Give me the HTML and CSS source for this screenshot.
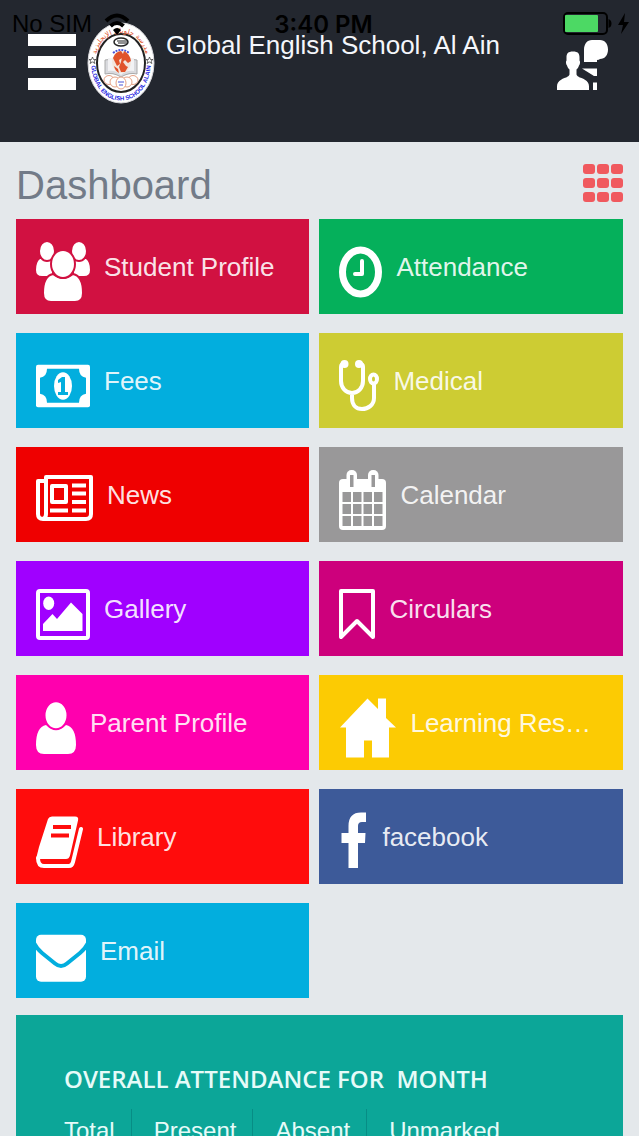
FILE: index.html
```html
<!DOCTYPE html>
<html lang="en">
<head>
    <meta charset="UTF-8">
    <meta name="viewport" content="width=device-width, initial-scale=1.0">
    <title>Global English School, Al Ain</title>
    <link rel="stylesheet" href="styles.css">
</head>
<body>
    <div class="status-bar">
        <span class="carrier">No SIM</span>
        <svg class="wifi" viewBox="0 0 26 22" aria-hidden="true">
            <path d="M2 8Q13 -3 24 8M6.500 13Q13 7 19.500 13" fill="none" stroke="#000" stroke-width="4"/>
            <path d="M13 22l-4-5q4-4 8 0z"/>
        </svg>
        <span class="clock">3:40 PM</span>
        <svg class="battery" viewBox="0 0 66 24" aria-hidden="true">
            <rect x="1" y="1" width="43" height="21" rx="4" fill="none" stroke="#000" stroke-width="2"/>
            <rect x="2" y="3" width="33" height="17" rx="1" fill="#4cd964"/>
            <path d="M45.500 7q3 1 3 4.500t-3 4.500zM62 1l-7 12h5l-2 9 8-12h-5z"/>
        </svg>
    </div>

    <header class="top-bar">
        <button class="menu-btn" aria-label="Menu"><span></span><span></span><span></span></button>
        <svg class="logo" viewBox="0 0 68 82" role="img" aria-label="School logo">
            <defs>
                <path id="arcTop" d="M9 38C9 2 59 2 59 38"/>
                <path id="arcBottom" d="M4 38C4 92 64 92 64 38"/>
            </defs>
            <ellipse cx="34" cy="41" rx="33" ry="40" fill="#fff" stroke="#d8d8dc"/>
            <ellipse cx="34" cy="41" rx="24" ry="29" fill="#fff" stroke="#222" stroke-width="2"/>
            <text class="logo-ar"><textPath href="#arcTop" startOffset="50%" text-anchor="middle">مدرسة جلوبال الإنجليزية</textPath></text>
            <text class="logo-en"><textPath href="#arcBottom" startOffset="50%" text-anchor="middle">GLOBAL ENGLISH SCHOOL ALAIN</textPath></text>
            <path d="M5.500 35l1 2.500H9l-2 1.500 1 2.500-2.500-1.500L3 41.500 4 39l-2-1.500h2.500zM62.500 35l1 2.500H66L64 39l1 2.500-2.500-1.500-2.500 1.500 1-2.500-2-1.500h2.500z" fill="none" stroke="#333" stroke-width=".7"/>
            <ellipse cx="34" cy="20" rx="7" ry="4" fill="#fff" stroke="#222" stroke-width="1.500"/>
            <path d="M30 19h11M31 21h9" stroke="#222"/>
            <path d="M26 31q8-6 16 0" stroke="#4a55d8" stroke-width="2" fill="none" stroke-dasharray="2 1"/>
            <path d="M18 38q8-2 16 4 8-6 16-4v14q-8-2-16 3-8-5-16-3z" fill="#d9dade" stroke="#aaa"/>
            <path d="M21 36q8-1 13 6 5-7 13-6v13q-8-1-13 4-5-5-13-4z" fill="#f2f2f4"/>
            <ellipse cx="34.500" cy="40" rx="9.500" ry="11" fill="#f2e5dc"/>
            <path d="M26 36q2-6 8-7l2 3-1 4-3 2 1 4-3 2zM37 29q6 3 7 10l-3 2-3-3-2 2 3 4 2 1-3 5h-4l-2-5 2-5 1-5zM27 44l4 3 1 4q-4-2-5-7z" fill="#e0532b"/>
            <g fill="#fff" stroke="#e5a184">
                <ellipse cx="22" cy="58" rx="5" ry="4.500"/>
                <ellipse cx="46" cy="58" rx="5" ry="4.500"/>
                <ellipse cx="28" cy="60" rx="5" ry="5"/>
                <ellipse cx="40" cy="60" rx="5" ry="5"/>
                <ellipse cx="34" cy="61" rx="5" ry="6"/>
            </g>
            <path d="M31 60h6M32 63h4" stroke="#4a55d8"/>
        </svg>
        <h1>Global English School, Al Ain</h1>
        <button class="contact-btn" aria-label="Contact teacher">
            <svg width="51" height="50" viewBox="0 0 51 50" fill="#fff" aria-hidden="true">
                <path d="M16 11.500c5 0 6.500 2 6.500 6v3c1 1 .5 4-.5 5-.5 2-1.500 3-2.500 4v5c1 3 5 3 8 5 3.500 2 4.500 4 4.500 7v3.500H0v-3.500c0-3 1-5 4.500-7 3-2 7-2 8-5v-5c-1-1-2-2-2.500-4-1-1-1.500-4-.5-5v-3c0-4 1.500-6 6.500-6z"/>
                <path d="M35 0h8c5 0 8 4 8 9.500S48 19 43 19q-1 1-3 1v2H27V10C27 4 30 0 35 0zM25 28.500h15V36h-3zM36 42.500h4V50h-4z"/>
            </svg>
        </button>
    </header>

    <main>
        <div class="title-row">
            <h2>Dashboard</h2>
            <button class="grid-btn" aria-label="Grid view">
                <i></i><i></i><i></i><i></i><i></i><i></i><i></i><i></i><i></i>
            </button>
        </div>

        <nav class="tiles">
            <a href="#" class="tile student">
                <svg width="54" height="70" viewBox="0 0 54 70" aria-hidden="true">
                    <path d="M4 27h12v17H6q-6 0-6-6 0-8 4-11zM50 27H38v17h10q6 0 6-6 0-8-4-11z"/>
                    <ellipse class="cut" cx="11" cy="19" rx="8" ry="10"/>
                    <ellipse class="cut" cx="43" cy="19" rx="8" ry="10"/>
                    <path class="cut" d="M17 42q10 8 20 0 10 2 10 19 0 9-8 9H15q-8 0-8-9 0-17 10-19z"/>
                    <ellipse class="cut" cx="27" cy="32" rx="12" ry="14"/>
                </svg>
                <span>Student Profile</span>
            </a>
            <a href="#" class="tile attendance">
                <svg width="43" height="70" viewBox="0 0 43 70" aria-hidden="true">
                    <ellipse class="line" cx="21.500" cy="40" rx="18" ry="22"/>
                    <path class="line" d="M23 29v13h-7"/>
                </svg>
                <span>Attendance</span>
            </a>
            <a href="#" class="tile fees">
                <svg width="54" height="70" viewBox="0 0 54 70" aria-hidden="true">
                    <rect y="18.700" width="54" height="42.500" rx="2"/>
                    <path class="hole" d="M11 22.700h32q0 8 7 9v16q-7 1-7 9H11q0-8-7-9v-16q7-1 7-9z"/>
                    <ellipse cx="27" cy="40" rx="9" ry="13.700"/>
                    <path class="hole" d="M26 31h3v15h3v3H22v-3h3V36l-3 1v-3z"/>
                </svg>
                <span>Fees</span>
            </a>
            <a href="#" class="tile medical">
                <svg width="40" height="70" viewBox="0 0 40 70" aria-hidden="true">
                    <path class="line" d="M5 18q-3 0-3 3v14c0 7 5 12 11 12s11-5 11-12V21q0-3-3-3M13 47v5c0 7 4 11 10 11s12-4 12-11V39"/>
                    <circle cx="5.500" cy="18" r="4"/>
                    <circle cx="20" cy="18" r="4"/>
                    <ellipse class="line" cx="34.500" cy="33" rx="3.500" ry="4.500"/>
                </svg>
                <span>Medical</span>
            </a>
            <a href="#" class="tile news">
                <svg width="57" height="70" viewBox="0 0 57 70" aria-hidden="true">
                    <path class="line" d="M10 54V17h45v37q0 5-5 5H7q-5 0-5-5V21h8v33q0 4-3 5"/>
                    <rect class="line" x="16" y="26" width="14" height="16"/>
                    <path class="line flat" d="M36 25.500h14M36 33.500h14M36 42h14M36 50.500h14M14 50.500h18"/>
                </svg>
                <span>News</span>
            </a>
            <a href="#" class="tile calendar">
                <svg width="47" height="70" viewBox="0 0 47 70" aria-hidden="true">
                    <rect y="19" width="47" height="51" rx="4"/>
                    <rect x="7.500" y="10" width="10.500" height="20" rx="5"/>
                    <rect x="29" y="10" width="10.500" height="20" rx="5"/>
                    <path class="hole" d="M11 15h3.500v12H11zM32.500 15H36v12h-3.500zM3.500 32H12v10H3.500zM14 32h8.500v10H14zM24.500 32H33v10h-8.500zM35 32h8.500v10H35zM3.500 44H12v10H3.500zM14 44h8.500v10H14zM24.500 44H33v10h-8.500zM35 44h8.500v10H35zM3.500 56H12v10H3.500zM14 56h8.500v10H14zM24.500 56H33v10h-8.500zM35 56h8.500v10H35z"/>
                </svg>
                <span>Calendar</span>
            </a>
            <a href="#" class="tile gallery">
                <svg width="54" height="70" viewBox="0 0 54 70" aria-hidden="true">
                    <rect class="line" x="2" y="17" width="50" height="47" rx="2"/>
                    <ellipse cx="12.700" cy="29.300" rx="5.500" ry="6.700"/>
                    <path d="M7 57v-7l9.500-10 4.500 5 14-16.500L46.500 40v17z"/>
                </svg>
                <span>Gallery</span>
            </a>
            <a href="#" class="tile circulars">
                <svg width="36" height="70" viewBox="0 0 36 70" aria-hidden="true">
                    <path class="line" d="M2 17h32v46L18 47 2 63z"/>
                </svg>
                <span>Circulars</span>
            </a>
            <a href="#" class="tile parent">
                <svg width="40" height="70" viewBox="0 0 40 70" aria-hidden="true">
                    <path d="M10 37q10 9 20 0 10 2 10 20 0 9-8 9H8q-8 0-8-9 0-18 10-20z"/>
                    <ellipse class="cut" cx="20" cy="27.300" rx="11.500" ry="14"/>
                </svg>
                <span>Parent Profile</span>
            </a>
            <a href="#" class="tile learning">
                <svg width="57" height="70" viewBox="0 0 57 70" aria-hidden="true">
                    <path d="M28.500 10.500L39 21V10.500h8V30l10 9.500h-7v30H33V52.500h-8v17H7v-30H1z"/>
                </svg>
                <span>Learning Resources</span>
            </a>
            <a href="#" class="tile library">
                <svg width="47" height="70" viewBox="0 0 47 70" aria-hidden="true">
                    <path d="M16 14.500h23q4 0 3 4l-8 35q-1 3.500-4 3.500H0l3-12 9-28q1-2.500 4-2.500z"/>
                    <path class="line" d="M45 27l-8 33q-1 4-4 4H8q-6 0-6-8"/>
                    <path class="line flat hole-line" d="M17 25h18M15 33.500h18"/>
                </svg>
                <span>Library</span>
            </a>
            <a href="#" class="tile facebook">
                <svg width="29" height="70" viewBox="0 0 29 70" aria-hidden="true">
                    <path d="M27 10.500V20h-4q-4 0-4 4v7h7.500l-.5 10h-7v25H9.500V41H2.500V31h7v-7q0-13.500 12.500-13.500z"/>
                </svg>
                <span>facebook</span>
            </a>
            <a href="#" class="tile email">
                <svg width="50" height="70" viewBox="0 0 50 70" aria-hidden="true">
                    <rect y="18.700" width="50" height="47" rx="5"/>
                    <path class="line hole-line" d="M-2 27Q1 33 6 37L19 47.500q6 5 12 0L44 37q5-4 8-10"/>
                </svg>
                <span>Email</span>
            </a>
        </nav>

        <section class="overall">
            <h3>OVERALL ATTENDANCE FOR&nbsp; MONTH</h3>
            <ul>
                <li>Total</li>
                <li>Present</li>
                <li>Absent</li>
                <li>Unmarked</li>
            </ul>
        </section>
    </main>
</body>
</html>
```

FILE: styles.css
```css
* {
    margin: 0;
    padding: 0;
    box-sizing: border-box;
}

body {
    font-family: 'Liberation Sans', Arial, sans-serif;
    background: #e4e8eb;
    height: 100vh;
    display: flex;
    flex-direction: column;
    overflow: hidden;
}

button {
    border: none;
    background: none;
    cursor: pointer;
}

h1, h2, h3 {
    font-weight: normal;
}

/* phone status bar, lies over the header */
.status-bar {
    position: absolute;
    top: 0;
    left: 0;
    right: 0;
    height: 48px;
    padding: 0 10px 0 12px;
    display: flex;
    align-items: center;
    color: #000;
    font-size: 24px;
    pointer-events: none;
}

.wifi {
    width: 26px;
    height: 22px;
    margin-left: 12px;
}

.clock {
    position: absolute;
    left: 0;
    right: 0;
    padding-left: 8px;
    text-align: center;
    font-family: Inter, 'Liberation Sans', sans-serif;
    font-weight: 600;
}

.battery {
    width: 66px;
    height: 24px;
    margin-left: auto;
}

.top-bar {
    flex: none;
    height: 142px;
    padding: 22px 31px 0 28px;
    background: #23272f;
    color: #f4f6fb;
    display: flex;
    align-items: flex-start;
}

.menu-btn {
    flex: none;
    width: 48px;
    margin-top: 12px;
    display: flex;
    flex-direction: column;
    gap: 10px;
}

.menu-btn span {
    width: 100%;
    height: 12px;
    background: #fff;
}

.logo {
    flex: none;
    width: 68px;
    height: 82px;
    margin-left: 11px;
}

.logo-ar {
    font: 7px 'DejaVu Sans', sans-serif;
    fill: #e0532b;
}

.logo-en {
    font: bold 6px 'Liberation Sans', sans-serif;
    fill: #1a1ae0;
}

.top-bar h1 {
    flex: 1;
    min-width: 0;
    margin-left: 11px;
    font-size: 26px;
    line-height: 46px;
    white-space: nowrap;
}

.contact-btn {
    flex: none;
    width: 51px;
    height: 50px;
    margin-top: 18px;
}

.contact-btn svg {
    display: block;
}

main {
    flex: 1;
    min-height: 0;
    padding: 0 16px;
    overflow-y: auto;
    scrollbar-width: none;
}

.title-row {
    height: 77px;
    padding-top: 8px;
    display: flex;
    align-items: center;
    justify-content: space-between;
}

h2 {
    font-size: 40px;
    line-height: 56px;
    color: #727b88;
}

.grid-btn {
    width: 40px;
    display: grid;
    grid-template-columns: repeat(3, 1fr);
    grid-auto-rows: 10px;
    gap: 4px 2px;
    margin-bottom: 4px;
}

.grid-btn i {
    background: #f0595e;
    border-radius: 3px;
}

.tiles {
    display: grid;
    grid-template-columns: 29fr 30fr;
    gap: 19px 10px;
}

.tile {
    --tile: #d11141;
    height: 95px;
    min-width: 0;
    padding: 0 20px;
    display: flex;
    align-items: center;
    gap: 14px;
    background: var(--tile);
    color: rgba(255, 255, 255, 0.9);
    font-size: 26px;
    line-height: 36px;
    text-decoration: none;
}

.tile svg {
    flex: none;
    fill: #fff;
}

.tile span {
    min-width: 0;
    padding-right: 8px;
    overflow: hidden;
    text-overflow: ellipsis;
    white-space: nowrap;
}

.tile .line {
    fill: none;
    stroke: #fff;
    stroke-width: 4;
    stroke-linecap: round;
    stroke-linejoin: round;
}

.tile .flat {
    stroke-linecap: butt;
}

.tile .cut {
    stroke: var(--tile);
    stroke-width: 2;
}

.tile .hole {
    fill: var(--tile);
}

.tile .hole-line {
    stroke: var(--tile);
}

.attendance ellipse.line {
    stroke-width: 7;
}

.attendance { --tile: #05b05b; }
.fees { --tile: #02aede; }
.medical { --tile: #cdcc33; }
.news { --tile: #ef0000; }
.calendar { --tile: #999899; }
.gallery { --tile: #a000ff; }
.circulars { --tile: #cd007c; }
.parent { --tile: #ff00ae; }
.learning { --tile: #fccb03; }
.library { --tile: #ff0c0c; }
.facebook { --tile: #3d5a99; }
.email { --tile: #02aede; }

.overall {
    margin-top: 17px;
    padding: 44px 48px;
    background: #0ca698;
    color: #e6fbf8;
}

.overall h3 {
    font-family: 'Open Sans', 'Noto Sans', sans-serif;
    font-size: 24px;
    font-weight: 600;
    line-height: 40px;
    white-space: nowrap;
}

.overall ul {
    margin-top: 10px;
    display: flex;
    list-style: none;
}

.overall li {
    padding: 6px 16px 20px 22px;
    border-right: 1px solid #078d85;
    font-size: 24px;
    line-height: 32px;
}

.overall li:first-child {
    padding-left: 0;
}

.overall li:last-child {
    border-right: none;
}
```
